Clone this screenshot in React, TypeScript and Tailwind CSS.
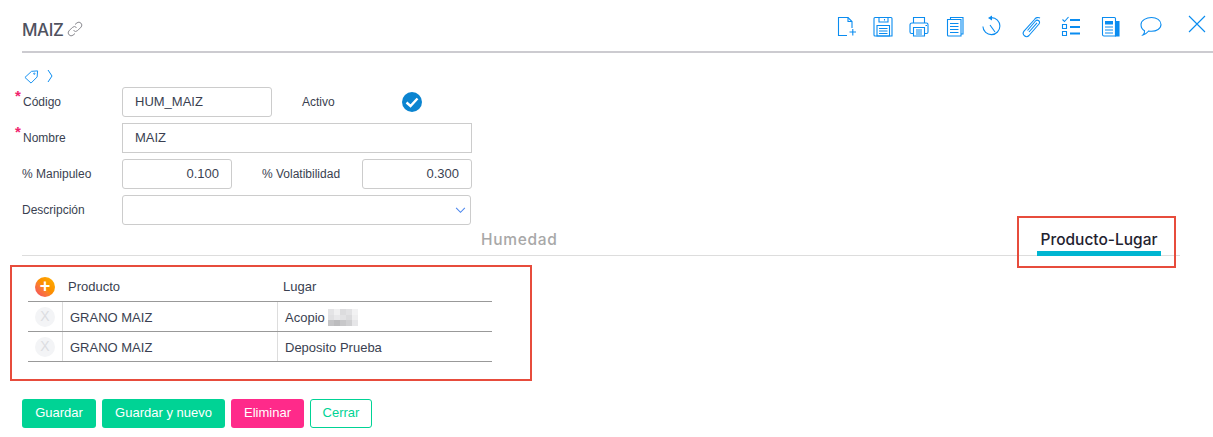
import type { ReactNode } from 'react';

const BLUE = '#0a8cf0';

function Icon({ className = '', children }: { className?: string; children: ReactNode }) {
  return (
    <svg
      viewBox="0 0 24 24"
      width={24}
      height={24}
      fill="none"
      stroke={BLUE}
      strokeWidth={1.1}
      className={className}
    >
      {children}
    </svg>
  );
}

function Toolbar() {
  return (
    <div className="flex items-start pt-[15px] pr-[4px]">
      {/* new doc */}
      <Icon>
        <path d="M12 20.500H3.500V2.500h9.500l4 4V13" />
        <path d="M13 2.500v4h4" />
        <path d="M14.500 17h6.500M17.800 14v6.500" />
      </Icon>
      {/* save */}
      <Icon className="ml-[12px]">
        <path d="M4 2.500h16a1 1 0 0 1 1 1v17.500H4a1 1 0 0 1-1-1V3.500a1 1 0 0 1 1-1z" />
        <path d="M8 2.500v4.500h9V2.500M13.500 4v1.500" />
        <path d="M6 10.500h12.500V21H6zM8 13.500h8.500M8 16h8.500M8 18.500h8.500" />
      </Icon>
      {/* print */}
      <Icon className="ml-[12px]">
        <path d="M6.500 8V2.500h11V8" />
        <path d="M6.500 18.500H4.500A1.500 1.500 0 0 1 3 17V10a2 2 0 0 1 2-2h14.500A1.500 1.500 0 0 1 21 9.500V17a1.500 1.500 0 0 1-1.500 1.500h-2" />
        <path d="M6.500 12.500h11V21h-11zM9 15h6M9 17h6M9 19h6" />
        <path d="M18.500 10.500h1.500" />
      </Icon>
      {/* copy */}
      <Icon className="ml-[12px]">
        <path d="M7.500 4.500v-2h12.500V19h-2" />
        <path d="M4.500 4.500H18V21H5.500a1 1 0 0 1-1-1z" />
        <path d="M7 8.500h8.500M7 11.500h8.500M7 14.500h8.500M7 17.500h8.500" />
      </Icon>
      {/* history */}
      <Icon className="ml-[12px]">
        <path d="M12.500 2.600a8.500 8.500 0 1 1-8.600 8.900" />
        <path d="M9 3l4-2.500v5z" fill={BLUE} stroke="none" />
        <path d="M11 10l5 7" />
      </Icon>
      {/* paperclip */}
      <Icon className="ml-[16px]">
        <path d="M8.500 15.500l8-9.500a2.300 2.300 0 0 1 3.500 3L10 20.500a3.300 3.300 0 0 1-5-4.300L15.500 4.500A4 4 0 0 1 21 3" />
        <path d="M10 17l8-9.200" />
      </Icon>
      {/* checklist */}
      <Icon className="ml-[16px]">
        <path d="M3.500 4.500l2 2L9.500 2" />
        <path d="M3.500 9.500h4v4h-4zM3.500 16.500h4v4h-4z" />
        <path d="M11 5h10M11 12h10M11 18.500h10" strokeWidth={2} />
      </Icon>
      {/* newspaper */}
      <Icon className="ml-[15px]">
        <path d="M4.500 2.500h12a1 1 0 0 1 1 1V21H6a1.500 1.500 0 0 1-1.500-1.500z" />
        <path d="M17.500 6.500h3.500V21h-3.500z" fill={BLUE} />
        <path d="M7 6h8v3.500H7z" fill={BLUE} stroke="none" />
        <path d="M7 12h8M7 15h8M7 18h8" />
      </Icon>
      {/* comment */}
      <Icon className="ml-[17px]">
        <path d="M12.500 2.500c5 0 9.500 2.700 9.500 7s-4.500 6.800-9.500 6.800c-1 0-2 0-2.800-.3C8 18 6 19.500 4 20c1-1 1.800-2.400 1.500-4.300C3.300 14.500 2 12.300 2 9.500c0-4.300 5.500-7 10.500-7z" />
      </Icon>
      {/* close */}
      <Icon className="ml-[22px]">
        <path d="M4 1l16 16M20 1L4 17" />
      </Icon>
    </div>
  );
}

function Field({ label, required }: { label: string; required?: boolean }) {
  return (
    <label className="relative block text-[12px] leading-[14px] text-[#3a3f51]">
      {required && (
        <span className="absolute top-[-6px] left-[-8px] text-[15px] font-bold text-[#f0246e]">*</span>
      )}
      {label}
    </label>
  );
}

function Mosaic() {
  const cells = [
    '#e4e4e6', '#f0f0f1', '#dcdcde', '#e2e2e4', '#f2f2f3',
    '#e0e0e2', '#e8e8ea', '#e2e2e4', '#dbdbdd', '#eeeeef',
    '#c4c4c6', '#bcbcbe', '#c8c8ca', '#d0d0d2', '#e6e6e8',
  ];
  return (
    <span className="ml-[3px] grid h-[17px] w-[30px] grid-cols-5 grid-rows-3">
      {cells.map((c, i) => (
        <span key={i} style={{ backgroundColor: c }} />
      ))}
    </span>
  );
}

function RemoveButton() {
  return (
    <span className="flex size-[20px] items-center justify-center rounded-full bg-[#f3f4f6] text-[14px] text-[#dcdde1]">
      X
    </span>
  );
}

const inputClass =
  'flex h-[30px] items-center rounded-[3px] border border-[#cccccc] px-[12px] text-[13px] text-[#3a3f51]';

function Row({ product, place, extra }: { product: string; place: string; extra?: boolean }) {
  return (
    <div className="flex h-[30px] border-b border-[#999999] text-[13px] text-[#3a3f51]">
      <div className="flex w-[35px] items-center justify-start border-r border-[#dddddd] pl-[7px]">
        <RemoveButton />
      </div>
      <div className="flex w-[215px] items-center border-r border-[#dddddd] pt-[2px] pl-[7px]">{product}</div>
      <div className="flex items-center pt-[2px] pl-[7px]">
        {place}
        {extra && <Mosaic />}
      </div>
    </div>
  );
}

export default function App() {
  return (
    <div className="relative h-[437px] w-[1213px] overflow-hidden bg-white font-['Liberation_Sans',sans-serif]">
      <header className="ml-[22px] flex h-[53px] justify-between border-b-2 border-[#cccbd0]">
        <div className="flex items-start pt-[19px]">
          <span className="font-['Inter',sans-serif] text-[17px] leading-[22px] font-medium tracking-[-0.4px] text-[#50525f]">
            MAIZ
          </span>
          <svg viewBox="0 0 18 18" width={18} height={18} fill="none" stroke="#8a8a90" strokeWidth={1} className="mt-[1px] ml-[2px]">
            <path d="M7.500 10.500a3 3 0 0 0 4.200 0l3.500-3.500a3 3 0 0 0-4.200-4.200L9 4.500" />
            <path d="M10.500 7.500a3 3 0 0 0-4.200 0l-3.500 3.500a3 3 0 0 0 4.200 4.200L9 13.500" />
          </svg>
        </div>
        <Toolbar />
      </header>

      <div className="mt-[14px] ml-[24px] flex h-[18px] items-center gap-[8px]">
        <svg viewBox="0 0 16 16" width={15} height={15} fill="none" stroke={BLUE} strokeWidth={1}>
          <path d="M1 9l7-6.500 6.500-.5-.5 6.500L7.500 15z" />
          <circle cx="11" cy="5" r="0.700" />
        </svg>
        <svg viewBox="0 0 6 14" width={6} height={14} fill="none" stroke={BLUE} strokeWidth={1}>
          <path d="M1 1l4 6-4 6" />
        </svg>
      </div>

      <form className="mt-[2px] ml-[22px] flex flex-col gap-[6px]">
        <div className="flex items-center">
          <div className="w-[100px] pl-[1px]">
            <Field label="Código" required />
          </div>
          <div className={`${inputClass} w-[150px]`}>HUM_MAIZ</div>
          <span className="ml-[30px] w-[100px] text-[12px] text-[#3a3f51]">Activo</span>
          <svg viewBox="0 0 20 20" width={20} height={20}>
            <circle cx="10" cy="10" r="10" fill="#0b84d0" />
            <path d="M4.500 10.500l4 3.500 7-7.500" fill="none" stroke="#ffffff" strokeWidth={2.400} />
          </svg>
        </div>
        <div className="flex items-center">
          <div className="w-[100px] pl-[1px]">
            <Field label="Nombre" required />
          </div>
          <div className={`${inputClass} w-[350px] rounded-none`}>MAIZ</div>
        </div>
        <div className="flex items-center">
          <div className="w-[100px]">
            <Field label="% Manipuleo" />
          </div>
          <div className={`${inputClass} w-[110px] justify-end`}>0.100</div>
          <span className="ml-[30px] w-[100px] text-[12px] text-[#3a3f51]">% Volatibilidad</span>
          <div className={`${inputClass} w-[110px] justify-end`}>0.300</div>
        </div>
        <div className="flex items-center">
          <div className="w-[100px]">
            <Field label="Descripción" />
          </div>
          <div className={`${inputClass} w-[349px] justify-end pr-[4px]`}>
            <svg viewBox="0 0 12 8" width={11} height={7} fill="none" stroke="#4a86ee" strokeWidth={1.200}>
              <path d="M1 1l5 5 5-5" />
            </svg>
          </div>
        </div>
      </form>

      <nav className="mt-[5px] ml-[22px] flex h-[26px] w-[1158px] border-b border-[#dddddd] font-['Inter',sans-serif] text-[15.500px] leading-[20px]">
        <span className="ml-[459px] w-[76px] font-medium tracking-[0.7px] whitespace-nowrap text-[#a8a8a8]">Humedad</span>
        <div className="ml-[480px] flex h-[26px] w-[124px] flex-col items-center border-b-[5px] border-[#00b5d1] font-medium whitespace-nowrap text-[#1f2230]">
          Producto-Lugar
        </div>
      </nav>

      <section className="mt-[9px] ml-[10px] h-[116px] w-[522px] border-2 border-[#e74c3c] pt-[7px] pl-[16px]">
        <div className="w-[464px]">
          <div className="flex h-[28px] items-center border-b border-[#999999] pb-[2px] text-[13px] text-[#3a3f51]">
            <span className="ml-[7px] flex size-[20px] items-center justify-center rounded-full bg-gradient-to-bl from-[#ffb300] via-[#fb8c00] to-[#f43f5e] pb-[2px] text-[18px] leading-none font-bold text-white">
              +
            </span>
            <span className="ml-[13px] w-[215px]">Producto</span>
            <span>Lugar</span>
          </div>
          <Row product="GRANO MAIZ" place="Acopio" extra />
          <Row product="GRANO MAIZ" place="Deposito Prueba" />
        </div>
      </section>

      <div className="mt-[18px] ml-[22px] flex gap-[6px] text-[13px]">
        <button type="button" className="h-[29px] w-[74px] rounded-[3px] bg-[#00d395] pb-[2px] text-white">
          Guardar
        </button>
        <button type="button" className="h-[29px] w-[123px] rounded-[3px] bg-[#00d395] pb-[2px] text-white">
          Guardar y nuevo
        </button>
        <button type="button" className="h-[29px] w-[73px] rounded-[3px] bg-[#ff2a8a] pb-[2px] text-white">
          Eliminar
        </button>
        <button type="button" className="h-[29px] w-[62px] rounded-[3px] border border-[#00d395] bg-white pb-[2px] text-[#00d395]">
          Cerrar
        </button>
      </div>

      {/* annotation over the tab */}
      <div className="absolute top-[216px] left-[1017px] h-[52px] w-[159px] border-2 border-[#e74c3c]" />
    </div>
  );
}
